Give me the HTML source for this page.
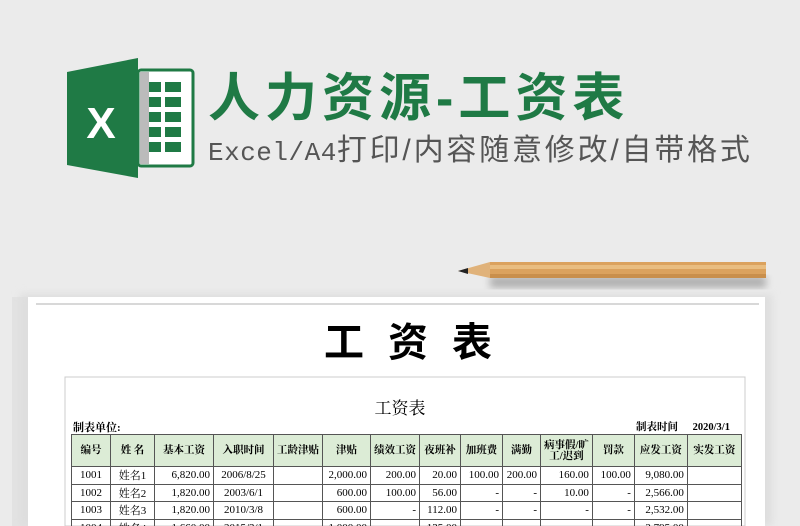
<!DOCTYPE html>
<html style="overflow:hidden"><head><meta charset="utf-8"><style>
html,body{margin:0;width:800px;height:526px;overflow:hidden}
body{background:#ebebeb;position:relative;font-family:"Liberation Sans","Noto Sans CJK SC",sans-serif}
.abs{position:absolute}
.t1{left:208px;top:66px;font-size:52px;font-weight:bold;color:#1f7a45;letter-spacing:5px;white-space:nowrap;line-height:66px}
.t2{left:208px;top:131px;font-size:30px;color:#555;white-space:nowrap;line-height:40px;letter-spacing:2.8px}
.t2 span{font-family:"Liberation Mono",monospace;font-size:26px;letter-spacing:0.5px}
table{border-collapse:collapse;position:absolute;left:71px;top:434px;font-family:"Liberation Serif","Noto Serif CJK SC",serif;font-size:11px}
td{border:1px solid #555;padding:0 3px;height:16.5px;text-align:right;white-space:nowrap}
tr.h td{background:#dcecd6;text-align:center;height:31px;font-weight:bold;font-size:10.5px;line-height:11px}
td.c{text-align:center}
</style></head><body>
<svg class="abs" style="left:0;top:0" width="800" height="526">
<defs><filter id="b"><feGaussianBlur stdDeviation="4"/></filter></defs>
<rect x="138" y="70" width="55" height="96" rx="3" fill="#fff" stroke="#1f7a45" stroke-width="3"/>
<rect x="140" y="72" width="9" height="92" fill="#bbb"/>
<g fill="#1f7a45">
<rect x="149" y="82" width="12" height="10"/><rect x="165" y="82" width="16" height="10"/>
<rect x="149" y="97" width="12" height="10"/><rect x="165" y="97" width="16" height="10"/>
<rect x="149" y="112" width="12" height="10"/><rect x="165" y="112" width="16" height="10"/>
<rect x="149" y="127" width="12" height="10"/><rect x="165" y="127" width="16" height="10"/>
<rect x="149" y="142" width="12" height="10"/><rect x="165" y="142" width="16" height="10"/>
</g>
<polygon points="67,72 138,58 138,178 67,165" fill="#1f7a45"/>
<text x="101" y="138" font-family="Liberation Sans" font-weight="bold" font-size="44" fill="#fff" text-anchor="middle">X</text>
<rect x="490" y="276" width="276" height="12" fill="#000" opacity="0.25" filter="url(#b)"/>
<polygon points="458,271 490,262 490,278" fill="#e0b27a"/>
<polygon points="458,271 468,268 468,274" fill="#222"/>
<rect x="490" y="262" width="276" height="16" fill="#dba25e"/>
<rect x="490" y="265" width="276" height="4" fill="#e9bd80"/>
<rect x="490" y="274" width="276" height="4" fill="#c98f4c"/>
<rect x="12" y="297" width="18" height="229" fill="#e2e2e2"/>
<rect x="20" y="294" width="752" height="232" fill="#dedede" filter="url(#b)"/>
<rect x="28" y="297" width="737" height="229" fill="#fff"/>
<line x1="36" y1="304" x2="759" y2="304" stroke="#ccc" stroke-width="1.5"/>
<rect x="65" y="377" width="680" height="149" fill="#fff" stroke="#ccc"/>
</svg>
<div class="abs t1">人力资源-工资表</div>
<div class="abs t2"><span>Excel/A4</span>打印/内容随意修改/自带格式</div>
<div class="abs" style="left:8px;width:800px;text-align:center;top:318px;font-size:40px;font-weight:bold;letter-spacing:24px;padding-left:24px;box-sizing:border-box;line-height:50px">工资表</div>
<div class="abs" style="left:0;width:800px;text-align:center;top:394px;font-size:17px;font-family:'Liberation Serif','Noto Serif CJK SC',serif">工资表</div>
<div class="abs" style="left:73px;top:419px;font-size:11px;font-weight:bold;font-family:'Liberation Serif','Noto Serif CJK SC',serif">制表单位:</div>
<div class="abs" style="left:636px;top:419px;font-size:10.5px;font-weight:bold;font-family:'Liberation Serif','Noto Serif CJK SC',serif;word-spacing:12px">制表时间 2020/3/1</div>
<table>
<colgroup><col style="width:39px"><col style="width:44px"><col style="width:59px"><col style="width:60px"><col style="width:49px"><col style="width:48px"><col style="width:47px"><col style="width:41px"><col style="width:42px"><col style="width:38px"><col style="width:49px"><col style="width:42px"><col style="width:53px"><col style="width:54px"></colgroup>
<tr class="h"><td>编号</td><td>姓 名</td><td>基本工资</td><td>入职时间</td><td>工龄津贴</td><td>津贴</td><td>绩效工资</td><td>夜班补</td><td>加班费</td><td>满勤</td><td>病事假/旷<br>工/迟到</td><td>罚款</td><td>应发工资</td><td>实发工资</td></tr>
<tr><td class="c">1001</td><td class="c">姓名1</td><td>6,820.00</td><td class="c">2006/8/25</td><td></td><td>2,000.00</td><td>200.00</td><td>20.00</td><td>100.00</td><td>200.00</td><td>160.00</td><td>100.00</td><td>9,080.00</td><td></td></tr>
<tr><td class="c">1002</td><td class="c">姓名2</td><td>1,820.00</td><td class="c">2003/6/1</td><td></td><td>600.00</td><td>100.00</td><td>56.00</td><td>-</td><td>-</td><td>10.00</td><td>-</td><td>2,566.00</td><td></td></tr>
<tr><td class="c">1003</td><td class="c">姓名3</td><td>1,820.00</td><td class="c">2010/3/8</td><td></td><td>600.00</td><td>-</td><td>112.00</td><td>-</td><td>-</td><td>-</td><td>-</td><td>2,532.00</td><td></td></tr>
<tr><td class="c">1004</td><td class="c">姓名4</td><td>1,660.00</td><td class="c">2015/3/1</td><td></td><td>1,000.00</td><td>-</td><td>135.00</td><td>-</td><td>-</td><td>-</td><td>-</td><td>2,795.00</td><td></td></tr>
</table>
</body></html>
